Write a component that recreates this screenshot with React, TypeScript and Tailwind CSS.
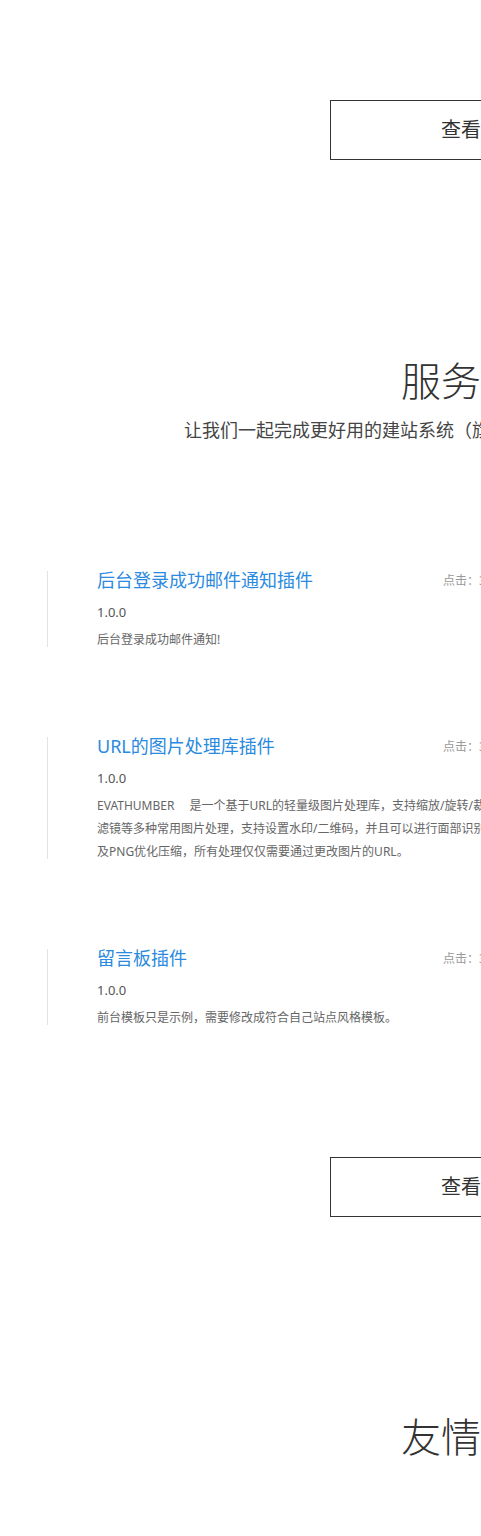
import React from "react";

const font = { fontFamily: '"Noto Sans", "Noto Sans CJK SC", sans-serif' };

type Item = { title: string; lines: string[] };

const items: Item[] = [
  { title: "后台登录成功邮件通知插件", lines: ["后台登录成功邮件通知!"] },
  {
    title: "URL的图片处理库插件",
    lines: [
      "EVATHUMBER\u3000 是一个基于URL的轻量级图片处理库，支持缩放/旋转/裁剪/格式转换/",
      "滤镜等多种常用图片处理，支持设置水印/二维码，并且可以进行面部识别，支持JPG",
      "及PNG优化压缩，所有处理仅仅需要通过更改图片的URL。",
    ],
  },
  { title: "留言板插件", lines: ["前台模板只是示例，需要修改成符合自己站点风格模板。"] },
];

function MoreButton() {
  return (
    <div className="flex justify-center">
      <a className="flex h-[60px] w-[302px] items-center justify-center border border-[#333] text-[20px] text-[#333]">
        查看更多
      </a>
    </div>
  );
}

export default function App() {
  return (
    <div className="h-[1536px] w-[481px] overflow-hidden bg-white" style={font}>
      <div className="w-[962px] pt-[100px]">
        <MoreButton />

        <h2 className="mt-[197px] text-center text-[40px] font-light leading-[48px] text-[#333]">服务项目</h2>
        <p className="mt-[13px] whitespace-nowrap text-center text-[18px] leading-[24px] text-[#444]">
          让我们一起完成更好用的建站系统（旗下产品与服务项目一览及相关插件）
        </p>

        <div className="mt-[129px] flex flex-col gap-[90px] pl-[47px]">
          {items.map((it) => (
            <div key={it.title} className="w-[868px] border-l border-[#e3e3e3] pl-[49px]">
              <div className="flex items-start">
                <h3 className="w-[346px] text-[18px] leading-[18px] text-[#2a8ae0]">{it.title}</h3>
                <span className="mt-[3px] text-[12px] leading-[14px] text-[#999]">点击：3</span>
              </div>
              <div className="mt-[13px] text-[13px] leading-[20px] text-[#555]">1.0.0</div>
              <div className="mb-[-4px] mt-[6px] text-[12px] leading-[23px] text-[#666]">
                {it.lines.map((l, i) => (
                  <div key={i} className="whitespace-nowrap">
                    {l}
                  </div>
                ))}
              </div>
            </div>
          ))}
        </div>

        <div className="mt-[132px]">
          <MoreButton />
        </div>

        <h2 className="mt-[196px] text-center text-[40px] font-light leading-[48px] text-[#333]">友情链接</h2>
      </div>
    </div>
  );
}
